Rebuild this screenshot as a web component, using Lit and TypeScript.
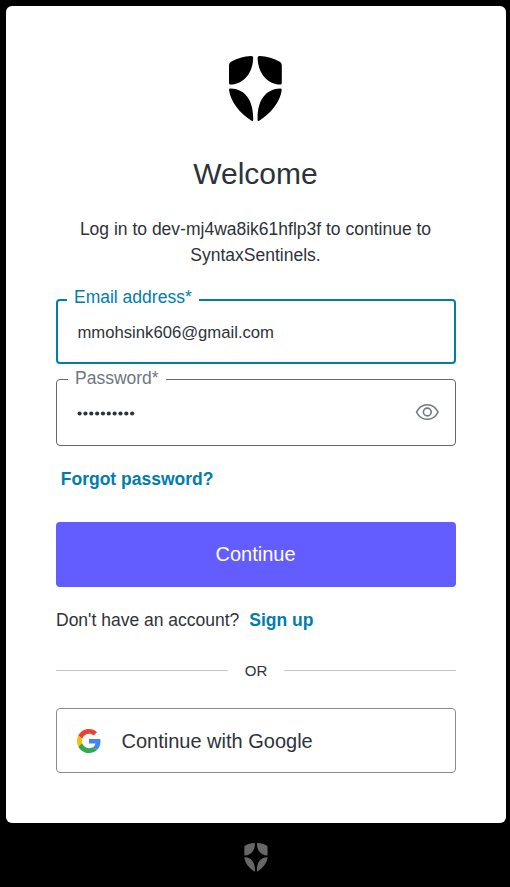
import { LitElement, html, css, svg } from "lit";
import { customElement, property } from "lit/decorators.js";

const halfShield = () => svg`
  <path d="M22.2 .1 Q24.2 0 24.2 1.7 C24 17 14.5 28.1 1.5 28.6 Q0 28.6 0 27 V9.2 Q0 6.9 2 5.8 C7.8 2.4 15 .5 22.2 .1Z"/>
  <path d="M1.5 32.5 C15.5 32.8 24.2 43.5 24.2 62 V64 Q24.2 65.6 22.6 64.7 C11 57.5 1.5 45.5 .1 34.2 Q-.1 32.4 1.5 32.5Z"/>`;

@customElement("shield-logo")
class ShieldLogo extends LitElement {
  static styles = css`
    :host { display: block; }
    svg { display: block; width: 100%; height: 100%; }
  `;
  render() {
    return html`<svg viewBox="0 0 53 66" fill="currentColor">
      <g>${halfShield()}</g>
      <g transform="translate(52.8 0) scale(-1 1)">${halfShield()}</g>
    </svg>`;
  }
}

@customElement("login-field")
class LoginField extends LitElement {
  @property() label = "";
  @property({ type: Boolean }) active = false;
  static styles = css`
    :host { display: block; }
    .box {
      position: relative;
      box-sizing: border-box;
      height: 67px;
      border: 1px solid #65676e;
      border-radius: 4px;
      display: flex;
      align-items: center;
      justify-content: space-between;
      padding: 0 16px 0 20px;
    }
    .active { height: 65px; border: 2px solid #007dad; padding-left: 19.5px; }
    .label {
      position: absolute;
      left: 11px;
      top: -13px;
      padding: 0 7px;
      background: #fff;
      color: #6f7780;
      font-size: 17.5px;
      line-height: 22px;
      white-space: nowrap;
    }
    .active .label { left: 9px; color: #007dad; top: -15px; }
  `;
  render() {
    return html`<div class="box ${this.active ? "active" : ""}">
      <span class="label">${this.label}</span><slot></slot>
    </div>`;
  }
}

@customElement("app-root")
class AppRoot extends LitElement {
  static styles = css`
    :host {
      display: flex;
      flex-direction: column;
      box-sizing: border-box;
      height: 887px;
      padding: 6px 4px 0 6px;
      background: #000;
      color: #2d333a;
      font-family: "Liberation Sans", Arial, sans-serif;
      font-size: 17.5px;
    }
    .card {
      box-sizing: border-box;
      height: 817px;
      flex: none;
      padding: 50px 50px 0;
      background: #fff;
      border-radius: 6px;
      display: flex;
      flex-direction: column;
    }
    .logo { width: 53px; height: 66px; margin: 0 0 0 173px; color: #000; }
    h1 { margin: 33px 1px 0 0; font-size: 30px; line-height: 38px; font-weight: 400; text-align: center; }
    .intro { margin: 23px 1px 0 0; line-height: 26px; text-align: center; }
    .email { margin-top: 31px; }
    .password { margin-top: 15px; }
    .value { font-size: 16.67px; line-height: 22px; padding-top: 2px; }
    .dots { display: block; width: 59px; height: 5px; padding-top: 1px; fill: #2d333a; }
    .eye { width: 24px; height: 18px; display: block; margin-bottom: 2px; }
    a { color: #007dad; font-weight: 700; text-decoration: none; }
    .forgot { margin: 22px 0 0 4.8px; line-height: 22px; }
    .primary, .social {
      font: 400 20px "Liberation Sans", Arial, sans-serif;
      height: 65px;
      border-radius: 4px;
      box-sizing: border-box;
      flex: none;
    }
    .primary { margin-top: 32px; border: 0; padding: 0 1px 0 0; background: #635dff; color: #fff; }
    .signup { margin-top: 22px; line-height: 22px; }
    .signup a { margin-left: 5px; }
    .divider { display: flex; align-items: center; gap: 17px; margin-top: 29px; height: 20px; font-size: 15px; }
    .divider span { padding-top: 1px; line-height: 21px; }
    .divider::before, .divider::after { content: ""; flex: 1; height: 1px; background: #c2c8d0; }
    .social {
      margin-top: 28px;
      border: 1px solid #8c8c90;
      background: #fff;
      color: #2d333a;
      display: flex;
      align-items: center;
      padding: 0 20px;
      gap: 20.5px;
    }
    .social span { padding-top: 2px; }
    .google { width: 24px; height: 24px; }
    .badge { width: 24px; height: 29px; margin: 20px auto 0 237.5px; color: #676767; }
  `;
  render() {
    return html`
      <main class="card">
        <shield-logo class="logo"></shield-logo>
        <h1>Welcome</h1>
        <p class="intro">Log in to dev-mj4wa8ik61hflp3f to continue to SyntaxSentinels.</p>
        <login-field class="email" label="Email address*" active>
          <span class="value">mmohsink606@gmail.com</span>
        </login-field>
        <login-field class="password" label="Password*">
          <svg class="dots" viewBox="0 0 59 5">
            ${Array.from({ length: 10 }, (_, i) => svg`<circle cx=${2.6 + i * 5.84} cy="2.5" r="2.1"/>`)}
          </svg>
          <svg class="eye" viewBox="0 0 24 18" fill="none" stroke="#6f7780" stroke-width="1.6">
            <path d="M1.5 9C3.9 4.2 7.4 1.7 12.3 1.7S20.7 4.2 23.1 9C20.7 13.8 17.2 16.3 12.3 16.3S3.9 13.8 1.5 9Z" stroke-linejoin="round"/>
            <circle cx="12.3" cy="9" r="3.9"/>
          </svg>
        </login-field>
        <div class="forgot"><a>Forgot password?</a></div>
        <button class="primary">Continue</button>
        <div class="signup">Don't have an account? <a>Sign up</a></div>
        <div class="divider"><span>OR</span></div>
        <button class="social">
          <svg class="google" viewBox="0 0 48 48">
            <path fill="#EA4335" d="M24 9.5c3.54 0 6.71 1.22 9.21 3.6l6.85-6.85C35.9 2.38 30.47 0 24 0 14.62 0 6.51 5.38 2.56 13.22l7.98 6.19C12.43 13.72 17.74 9.5 24 9.5z"/>
            <path fill="#4285F4" d="M46.98 24.55c0-1.57-.15-3.09-.38-4.55H24v9.02h12.94c-.58 2.96-2.26 5.48-4.78 7.18l7.73 6c4.51-4.18 7.09-10.36 7.09-17.65z"/>
            <path fill="#FBBC05" d="M10.53 28.59c-.48-1.45-.76-2.99-.76-4.59s.27-3.14.76-4.59l-7.98-6.19C.92 16.46 0 20.12 0 24c0 3.88.92 7.54 2.56 10.78l7.97-6.19z"/>
            <path fill="#34A853" d="M24 48c6.48 0 11.93-2.13 15.89-5.81l-7.73-6c-2.15 1.45-4.92 2.3-8.16 2.3-6.26 0-11.57-4.22-13.47-9.91l-7.98 6.19C6.51 42.62 14.62 48 24 48z"/>
          </svg>
          <span>Continue with Google</span>
        </button>
      </main>
      <shield-logo class="badge"></shield-logo>
    `;
  }
}
